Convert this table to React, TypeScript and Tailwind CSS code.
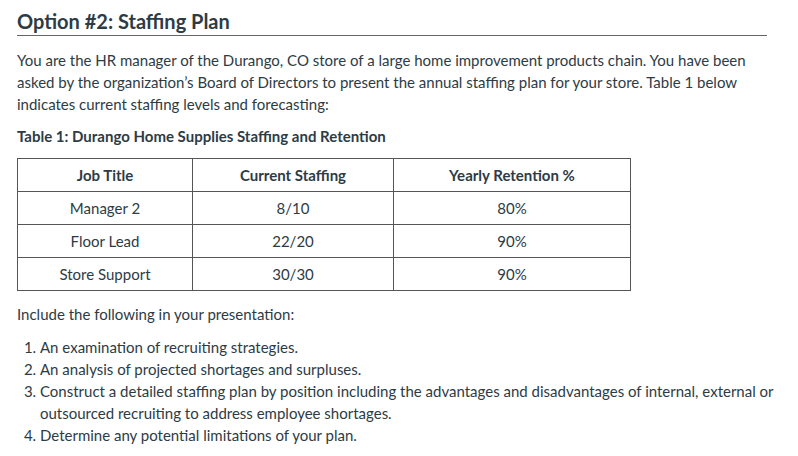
export default function App() {
  const rows = [
    ["Manager 2", "8/10", "80%"],
    ["Floor Lead", "22/20", "90%"],
    ["Store Support", "30/30", "90%"],
  ];
  return (
    <div
      className="w-[798px] h-[456px] bg-white overflow-hidden text-[#2d3b45]"
      style={{ fontFamily: "Lato, 'Open Sans', sans-serif" }}
    >
      <div className="pl-[17px] w-[767px]">
        <h2 className="pt-[9px] pb-[2px] text-[20px] leading-[24px] font-bold border-b border-[#666]">
          Option #2: Staffing Plan
        </h2>
        <p className="mt-[13px] text-[15px] leading-[22px]">
          You are the HR manager of the Durango, CO store of a large home improvement products chain. You have been
          asked by the organization’s Board of Directors to present the annual staffing plan for your store. Table 1 below
          indicates current staffing levels and forecasting:
        </p>
        <p className="mt-[10px] text-[15px] leading-[22px] font-bold">
          Table 1: Durango Home Supplies Staffing and Retention
        </p>
        <table className="mt-[11px] w-[614px] border-collapse text-[15px] leading-[22px] text-center">
          <thead>
            <tr>
              <th className="w-[175px] border border-[#555] py-[5px] font-bold">Job Title</th>
              <th className="w-[201px] border border-[#555] py-[5px] font-bold">Current Staffing</th>
              <th className="border border-[#555] py-[5px] font-bold">Yearly Retention %</th>
            </tr>
          </thead>
          <tbody>
            {rows.map((r) => (
              <tr key={r[0]}>
                {r.map((c, i) => (
                  <td key={i} className="border border-[#555] py-[5px]">
                    {c}
                  </td>
                ))}
              </tr>
            ))}
          </tbody>
        </table>
        <p className="mt-[12px] text-[15px] leading-[22px]">Include the following in your presentation:</p>
        <ol className="mt-[11px] w-[778px] pl-[23px] list-decimal text-[15px] leading-[22px]">
          <li>An examination of recruiting strategies.</li>
          <li>An analysis of projected shortages and surpluses.</li>
          <li>
            Construct a detailed staffing plan by position including the advantages and disadvantages of internal, external or
            outsourced recruiting to address employee shortages.
          </li>
          <li>Determine any potential limitations of your plan.</li>
        </ol>
      </div>
    </div>
  );
}
